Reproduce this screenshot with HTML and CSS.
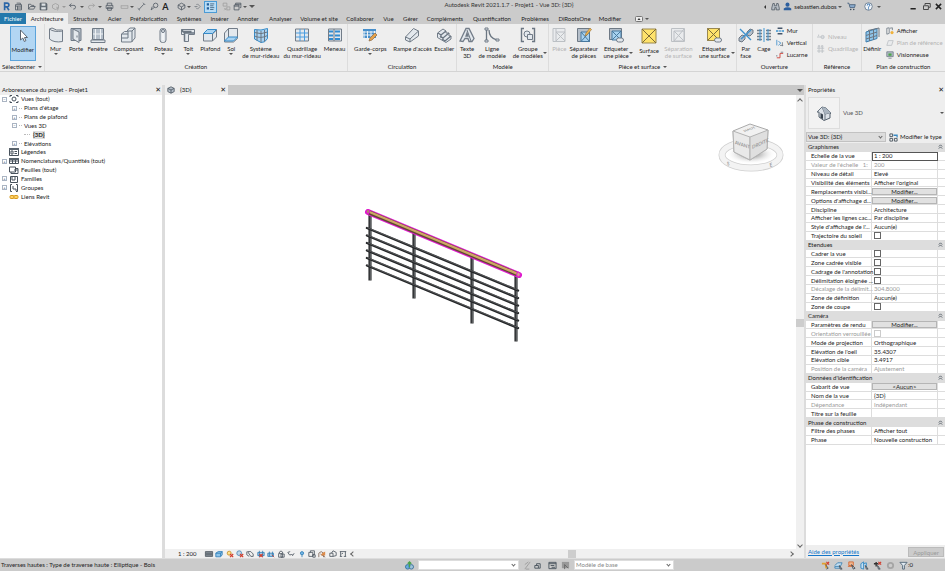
FILE: index.html
```html
<!DOCTYPE html>
<html lang="fr">
<head>
<meta charset="utf-8">
<title>Autodesk Revit 2021.1.7 - Projet1 - Vue 3D: {3D}</title>
<link rel="stylesheet" href="styles.css">
</head>
<body>
<div class="app">
<header class="titlebar">
  <div class="qat">
    <button class="tool" aria-label="Menu Revit"><svg viewBox="0 0 12 12"><path d="M3.5 11V1.5h3.2a2.4 2.4 0 0 1 0 5H3.5M6.3 6.5 9.3 11" fill="none" stroke="#2b67a8" stroke-width="2.2"/></svg></button>
    <button class="tool" aria-label="Accueil"><svg viewBox="0 0 12 12"><path d="M2 3.5h8v7H2zM2 5.5h8M4.7 5.500v5M4.700 8H10M3.500 1.500h5v2" class="d"/></svg></button>
    <button class="tool" aria-label="Ouvrir"><svg viewBox="0 0 12 12"><path d="M2 9.500V3h3l1 1.500h3V6M2 9.500 4.500 6H11L9 9.500z" class="d"/></svg></button>
    <button class="tool" aria-label="Enregistrer"><svg viewBox="0 0 12 12"><path d="M1.500 1.500h8l1 1v8h-9z" fill="#667079" stroke="#4a535c"/><path d="M3.500 2h5v3h-5zM3 7h6v3H3z" fill="#dde1e4"/></svg></button>
    <button class="tool" aria-label="Synchroniser"><svg viewBox="0 0 12 12"><path d="m2 4 4-2 4 2v4L6 10 2 8zM7 7a2 2 0 1 1 1 4" class="g"/></svg></button>
    <span class="caret pale"></span>
    <button class="tool" aria-label="Annuler"><svg viewBox="0 0 12 12"><path d="M4.500 2 2 4.500 4.500 7M2 4.500h6q2 0 2 2.500t-3 2.500" class="d"/></svg></button>
    <span class="caret"></span>
    <button class="tool" aria-label="Rétablir"><svg viewBox="0 0 12 12"><path d="M7.500 2 10 4.500 7.500 7M10 4.500H4q-2 0-2 2.500t3 2.500" class="g"/></svg></button>
    <span class="caret"></span>
    <button class="tool" aria-label="Imprimer"><svg viewBox="0 0 12 12"><path d="M3 4.500v-3h6v3M1.500 4.500h9v4h-9zM3.500 7h5v4h-5z" class="d"/></svg></button>
    <span></span>
    <button class="tool" aria-label="Mesurer"><svg viewBox="0 0 12 12"><path d="M1.500 4.500v4M10.500 4.500v4M1.500 5h9M1.500 8.500h9" class="g"/></svg></button>
    <span class="caret"></span>
    <button class="tool" aria-label="Cote alignée"><svg viewBox="0 0 12 12"><path d="M1 8.500 4 11M3 9.500 9 3M8 1l3 3" class="d"/></svg></button>
    <button class="tool" aria-label="Etiquette"><svg viewBox="0 0 12 12"><circle cx="7.500" cy="4.500" r="3" class="d"/><path d="M1.500 10.500 3 6M1.500 10.500 6 7" class="d"/></svg></button>
    <button class="tool letter" aria-label="Texte">A</button>
    <span></span>
    <button class="tool" aria-label="Vue 3D par défaut"><svg viewBox="0 0 12 12"><path d="m1.500 4 4.500-2.500L10.500 4v4L6 10.500 1.500 8zM1.500 4 6 6.500 10.500 4M6 6.500v4" class="d"/></svg></button>
    <span class="caret"></span>
    <button class="tool" aria-label="Coupe"><svg viewBox="0 0 12 12"><path d="M2 6h4M6 2.500 9.500 6 6 9.500 4 7.500M6 2.500 4.500 4" class="d" opacity=".7"/></svg></button>
    <button class="tool on" aria-label="Lignes fines"><svg viewBox="0 0 12 12"><path d="M1 1.500h3v3H1zM1 7h3v3H1z" fill="#245f9b"/><path d="M5.500 2.500H11M5.500 5H10M5.500 7.500H11M5.500 10H10" stroke="#31536f"/></svg></button>
    <span></span>
    <button class="tool" aria-label="Fermer inactives"><svg viewBox="0 0 12 12"><path d="M1.500 1.500h5v4h-5zM6.500 6.500h4v4h-4zM3 8l3 3M3 11l3-3" class="g"/></svg></button>
    <button class="tool" aria-label="Changer de fenêtre"><svg viewBox="0 0 12 12"><path d="M3.500 4V1.500h7v6H9M1.500 4H8v6.500H1.500zM1.500 5.500H8M3.500 3h7" class="d"/></svg></button>
    <span class="caret"></span>
    <span class="caret wide"></span>
  </div>
  <h1 class="title">Autodesk Revit 2021.1.7 - Projet1 - Vue 3D: {3D}</h1>
  <div class="account">
    <span class="tri-left"></span>
    <button class="tool" aria-label="Rechercher"><svg viewBox="0 0 12 12"><path d="M2.500 2h2v3h3V2h2l1.500 6v2.500H7V7.500H5v3H1V8z" fill="#b6bdc4" stroke="#4c5660"/></svg></button>
    <button class="tool" aria-label="Compte"><svg viewBox="0 0 12 12"><circle cx="6" cy="3.500" r="2.700" fill="#2d5f9e"/><path d="M1 11V8.500Q3 7 6 7t5 1.500V11z" fill="#2d5f9e"/></svg></button>
    <button class="user">sebastien.dubos<span class="caret"></span></button>
    <button class="tool" aria-label="App Store"><svg viewBox="0 0 12 12"><path d="M.5 1.500h2L4 7.500h6l1-4H3.500" fill="#89a9cc" stroke="#3e5771"/><circle cx="5" cy="10" r="1" fill="#345"/><circle cx="9" cy="10" r="1" fill="#345"/></svg></button>
    <button class="tool" aria-label="Aide"><svg viewBox="0 0 12 12"><circle cx="6" cy="6" r="5" fill="#f2f6fa" stroke="#52677e"/><path d="M4.300 4.700q0-2 1.800-2t1.700 1.700Q7.800 5.500 6 6.500v1M6 8.500V10" fill="none" stroke="#2a6cb0" stroke-width="1.300"/></svg></button>
    <span class="caret"></span>
    <span></span>
    <button class="tool" aria-label="Réduire"><svg viewBox="0 0 12 12"><path d="M2 9h7" stroke="#222" stroke-width="2"/></svg></button>
    <button class="tool" aria-label="Restaurer"><svg viewBox="0 0 12 12"><path d="M4 4V2h7v5H9M2 5h6.500v5H2z" fill="none" stroke="#444" stroke-width="1.300"/></svg></button>
    <button class="tool" aria-label="Fermer"><svg viewBox="0 0 12 12"><path d="m2.500 2.500 7 7m0-7-7 7" stroke="#222" stroke-width="2"/></svg></button>
  </div>
</header>

<nav class="tabs">
  <button class="file">Fichier</button><button class="active">Architecture</button><button>Structure</button><button>Acier</button><button>Préfabrication</button><button>Systèmes</button><button>Insérer</button><button>Annoter</button><button>Analyser</button><button>Volume et site</button><button>Collaborer</button><button>Vue</button><button>Gérer</button><button>Compléments</button><button>Quantification</button><button>Problèmes</button><button>DiRootsOne</button><button>Modifier</button><button class="min" aria-label="Réduire le ruban"><svg viewBox="0 0 8 6"><rect x=".5" y=".5" width="7" height="5" rx="1" fill="#eee" stroke="#777"/><path d="m2.500 4 1.500-2 1.500 2z" fill="#333"/></svg><span class="caret"></span></button>
</nav>

<section class="ribbon" aria-label="Ruban">
  <div class="panel p-select">
    <div class="tools"><button class="big selected"><svg viewBox="0 0 16 16"><path d="M5.500 2v10l2.300-2 1.500 3.500 1.600-.8L9.500 9.500h3z" fill="#fff" stroke="#5b6672"/></svg><span>Modifier</span></button></div>
    <div class="name">Sélectionner <span class="caret"></span></div>
  </div>
  <div class="panel p-create">
    <div class="tools">
      <button class="big"><svg viewBox="0 0 16 16"><path d="M1.500 2Q6 5.500 14.500 4v10.500Q6 16 1.500 12z" class="s"/><path d="M1.500 2 4 1q4 3 10.500 2v1" class="s"/></svg><span>Mur</span><i class="caret"></i></button>
      <button class="big"><svg viewBox="0 0 16 16"><path d="M3 1.500h10v12H3z" class="k"/><path d="m5 2 6 3v10.500L5 12z" class="s"/><path d="M9 8.500v2" class="l"/></svg><span>Porte</span></button>
      <button class="big"><svg viewBox="0 0 16 16"><path d="M2.500 1.500h11v11h-11z" class="k"/><path d="M5.500 2v10M10.500 2v10M3 7h10" stroke="#eef1f4"/><path d="M1 13h14v2.500H1z" class="s"/></svg><span>Fenêtre</span></button>
      <button class="big"><svg viewBox="0 0 16 16"><path d="m1.500 7 3-2.500h3V3L10 1h5v10l-3.500 4h-10z" class="s"/><path d="M1.500 7H8V4h4v11M12 4l3-3M8 7v4H1.500" class="l"/></svg><span>Composant</span><i class="caret"></i></button>
      <button class="big"><svg viewBox="0 0 16 16"><rect x="5" y="1.500" width="6" height="14" rx="2.500" class="s"/><ellipse cx="8" cy="4" rx="1.500" ry="1.500" class="l"/><path d="M8 6v7" stroke="#fff"/></svg><span>Poteau</span><i class="caret"></i></button>
      <button class="big"><svg viewBox="0 0 16 16"><path d="M1.500 2.500h13v5h-6v7h-4v-7h-3z" class="s"/><path d="M1.500 2.500 4.500 6h10M4.500 6v8.500M1.500 4.500h10" class="l" stroke-width="1.500"/></svg><span>Toit</span><i class="caret"></i></button>
      <button class="big"><svg viewBox="0 0 16 16"><path d="m1.500 7 4-4h9v7l-4 4h-9z" class="s"/><path d="M10.500 14V7l4-4" class="l"/><path d="m1.500 6.500 4-4h9l-4 4z" class="b"/></svg><span>Plafond</span></button>
      <button class="big"><svg viewBox="0 0 16 16"><path d="m1.500 6 4-4.500h9v10l-4 3.500h-9z" class="s"/><path d="M5.500 1.500V10" class="l"/><path d="m1.500 14 4-4h9l-4 4z" class="b"/></svg><span>Sol</span><i class="caret"></i></button>
      <button class="big"><svg viewBox="0 0 16 16"><path d="M1.500 2.500Q8 4 14.500 1.500v10Q12 16 8 15.500L1.500 12z" class="b"/><path d="M1.500 5.500Q8 8 14.500 5M1.500 9Q8 12 14.500 8.500M4 3v10.500M8 4v11.500M11.500 3v11.500" class="l"/></svg><span>Système<br>de mur-rideau</span></button>
      <button class="big"><svg viewBox="0 0 16 16"><path d="M1.500 2h13v12h-13z" class="s"/><path d="M6 2v12M10.500 2v12M2 6h12M2 10h12" stroke="#4a9de0"/></svg><span>Quadrillage<br>du mur-rideau</span></button>
      <button class="big"><svg viewBox="0 0 16 16"><path d="M1.500 2h13v12h-13z" class="s"/><path d="M2 4.500h4M8 4.500h5M2 8.500h4M8 8.500h5M2 12h4M8 12h5" stroke="#328bd0" stroke-width="2.200"/><path d="M7 2v12" class="l"/></svg><span>Meneau</span></button>
    </div>
    <div class="name">Création</div>
  </div>
  <div class="panel p-circ">
    <div class="tools">
      <button class="big"><svg viewBox="0 0 16 16"><path d="M1 2h13v9H1z" fill="#478fcb"/><path d="M2 14V4M5.500 12V4M9 12V4M12.500 9V4M1 5h13M1 8h13" stroke="#edf2f6"/><path d="m7 14 1-3 5-5 2 2-5 5z" fill="#e6a24a" stroke="#8b6844" stroke-width=".7"/></svg><span>Garde-corps</span><i class="caret"></i></button>
      <button class="big"><svg viewBox="0 0 16 16"><path d="m1.500 10 8-8.500L14.500 4v5L6 15l-4.500-2z" class="s"/><path d="M1.500 10 6 12l8.500-8M6 12v3" class="l"/></svg><span>Rampe d'accès</span></button>
      <button class="big"><svg viewBox="0 0 16 16"><path d="M1.500 6 7 2l3 2v2h3v3h2v3l-5 3.500-8.500-5z" class="s"/><path d="m2 6 3 2 5-4M4 9l3 2 6-5M6 12l3 2 6-5M5 8v3M7 11v2" class="l" stroke-width="1.300"/></svg><span>Escalier</span></button>
    </div>
    <div class="name">Circulation</div>
  </div>
  <div class="panel p-model">
    <div class="tools">
      <button class="big"><svg viewBox="0 0 16 16"><path d="M1 14 7 1.500h3l5 10-2 3h-3l-1-3H6l-2 3zM7 9h2L8 6z" class="s" stroke-width="1.300"/><path d="m8 3 4 11" class="l"/></svg><span>Texte<br>3D</span></button>
      <button class="big"><svg viewBox="0 0 16 16"><path d="M2.500 2v12M5 3q0 8 8 10" class="l" stroke-width="1.300"/><path d="M1 1h3v2H1zM1 13h3v2H1zM12 12h3v2h-3z" class="s"/></svg><span>Ligne<br>de modèle</span></button>
      <button class="big"><svg viewBox="0 0 16 16"><path d="M4 1.500H1.500v13H4M12 1.500h2.500v13H12" class="l" stroke-width="1.400"/><circle cx="7" cy="7" r="3" class="s"/><path d="M7.500 7.500h5v5h-5z" class="s"/></svg><span>Groupe<br>de modèles</span><i class="caret side"></i></button>
    </div>
    <div class="name">Modèle</div>
  </div>
  <div class="panel p-room">
    <div class="tools">
      <button class="big" disabled><svg viewBox="0 0 16 16"><path d="M2 1.500h12v13H2zM5 5h9M5 2v12M5 5l9 9M5 14l9-9" class="s"/></svg><span>Pièce</span></button>
      <button class="big"><svg viewBox="0 0 16 16"><path d="M1.500 1.500h12v13h-12z" class="k"/><path d="M5 5h8.500v9.500H5z" fill="#a8d2ef" stroke="#48799e"/><path d="m5 5 8.500 9.500M5 14.500 13.500 5" stroke="#48799e"/><path d="m9 9 1-3 4-5 1.500 1.500L11 8z" fill="#f0b64f" stroke="#94703b" stroke-width=".6"/></svg><span>Séparateur<br>de pièces</span></button>
      <button class="big"><svg viewBox="0 0 16 16"><path d="M1.500 1.500h12v11h-12z" class="k"/><path d="M4 4h9v9H4z" fill="#a8d2ef" stroke="#48799e"/><path d="m4 4 9 9M4 13l9-9" stroke="#48799e"/><rect x="8.500" y="11" width="7" height="4" rx="2" class="s"/></svg><span>Etiqueter<br>une pièce</span><i class="caret side"></i></button>
      <button class="big area"><svg viewBox="0 0 16 16"><path d="M1 1h14v14H1z" fill="#ffe36b" stroke="#9a8850"/><path d="m1 1 14 14M1 15 15 1" stroke="#7d6b38"/></svg><span>Surface</span><i class="caret"></i></button>
      <button class="big" disabled><svg viewBox="0 0 16 16"><path d="M1.500 1.500h13v13h-13zM4 4h10v10H4zM4 4l10 10M4 14 14 2" class="s"/></svg><span>Séparation<br>de surface</span></button>
      <button class="big"><svg viewBox="0 0 16 16"><path d="M1.500 1.500h12v12h-12z" fill="#ffe36b" stroke="#9a8850"/><path d="m1.500 1.500 12 12M1.500 13.500l12-12" stroke="#7d6b38"/><rect x="8.500" y="11" width="7" height="4" rx="2" class="s"/></svg><span>Etiqueter<br>une surface</span><i class="caret side"></i></button>
    </div>
    <div class="name">Pièce et surface <span class="caret"></span></div>
  </div>
  <div class="panel p-open">
    <div class="tools">
      <button class="big"><svg viewBox="0 0 16 16"><path d="m9 5 3-3 3 1v3l-3 3-3-1zM1 11l3-3 3 1v3l-3 3-3-1z" class="k"/><path d="m2 2 11 11M3 12 13 3" stroke="#3f91cd" stroke-width="1.400"/></svg><span>Par<br>face</span></button>
      <button class="big"><svg viewBox="0 0 16 16"><path d="M1 3.500h5M10 3.500h5M1 6.500h5M10 6.500h5M1 9.500h5M10 9.500h5M1 12.500h5M10 12.500h5" stroke="#737d88" stroke-width="1.700"/><path d="M8 1v14M4 2v12M12 2v12" stroke="#4598d3"/></svg><span>Cage</span></button>
      <div class="stack">
        <button><svg viewBox="0 0 10 10"><path d="M2 1.500h6M2 8.500h6" stroke="#44556a" stroke-width="2"/><path d="M0 5h3M7 5h3M4 5h2" stroke="#3b92d0" stroke-width="2"/></svg>Mur</button>
        <button><svg viewBox="0 0 10 10"><path d="M1 1v7M3 3l3 2-3 3" stroke="#3289ca" fill="none"/><path d="M8 4v5M5 8h4" class="l"/></svg>Vertical</button>
        <button><svg viewBox="0 0 10 10"><path d="M1 8.500h4V3h4" fill="none" stroke="#cf4b43" stroke-width="1.200"/><path d="M1 7V5M6 1.500h3" class="l"/></svg>Lucarne</button>
      </div>
    </div>
    <div class="name">Ouverture</div>
  </div>
  <div class="panel p-ref">
    <div class="tools"><div class="stack two">
      <button disabled><svg viewBox="0 0 10 10"><path d="M0 5h5M2 2v2" class="l"/><circle cx="7" cy="5" r="2" class="k"/></svg>Niveau</button>
      <button disabled><svg viewBox="0 0 10 10"><path d="M2.500 2v8M6.500 2v8M0 4h9M0 7.500h9" class="l"/><circle cx="2.500" cy="1.500" r="1" class="l"/><circle cx="6.500" cy="1.500" r="1" class="l"/></svg>Quadrillage</button>
    </div></div>
    <div class="name">Référence</div>
  </div>
  <div class="panel p-plan">
    <div class="tools">
      <button class="big"><svg viewBox="0 0 16 16"><path d="m2 5 11-3.500v10L2 15z" fill="#8fc5ea" stroke="#3f7caa"/><path d="M5.500 4v10M9.500 3v10M2 8.500 13 5M2 12l11-3.500M4 3.500 15 1v9" class="l" stroke="#3f7caa"/></svg><span>Définir</span></button>
      <div class="stack">
        <button><svg viewBox="0 0 10 10"><path d="M1 1.500 4 1v7L1 9zM5 1.500l3-.5v3" class="l"/><circle cx="7.500" cy="7" r="2" fill="#f0b23c"/></svg>Afficher</button>
        <button disabled><svg viewBox="0 0 10 10"><path d="M3 2h6L7 8H1z" class="s"/></svg>Plan de référence</button>
        <button><svg viewBox="0 0 10 10"><path d="M1 1h8v6H1zM3 9h4" class="k"/><path d="M3 3h4v3H3z" fill="#4da34c"/></svg>Visionneuse</button>
      </div>
    </div>
    <div class="name">Plan de construction</div>
  </div>
</section>
<div class="optionbar"></div>

<main class="workspace">
  <aside class="browser">
    <div class="bar"><span>Arborescence du projet - Projet1</span><button class="x" aria-label="Fermer l'arborescence">✕</button></div>
    <ul class="tree">
      <li><b class="ex">−</b><svg viewBox="0 0 10 8"><path d="M1 2V.5h2M7 .5h2V2M1 6v1.500h2M7 7.500h2V6" class="d"/><circle cx="5" cy="4" r="2" class="d"/></svg>Vues (tout)</li>
      <li class="sub"><b class="ex">+</b><u></u>Plans d'étage</li>
      <li class="sub"><b class="ex">+</b><u></u>Plans de plafond</li>
      <li class="sub"><b class="ex">−</b><u></u>Vues 3D</li>
      <li class="leaf"><u></u><strong>{3D}</strong></li>
      <li class="sub"><b class="ex">+</b><u></u>Elévations</li>
      <li><b class="no"></b><svg viewBox="0 0 10 8"><path d="M.5.5h9v7h-9zM2 3h2v3H2zM5.500 3.500H8M5.500 5.500H8" class="d"/><path d="M0 0h10v2H0z" fill="#59636c"/></svg>Légendes</li>
      <li><b class="ex">+</b><svg viewBox="0 0 10 8"><path d="M.5 1.500h9v5h-9zM.5 4h9M3.500 1v6M6.500 1v6" class="d"/><path d="M0 1h10v2H0z" fill="#59636c"/></svg>Nomenclatures/Quantités (tout)</li>
      <li><b class="no"></b><svg viewBox="0 0 10 8"><path d="M.5 1h6v5h-6zM2 6v1.500h7v-5H6.500M5 4h4" class="d"/></svg>Feuilles (tout)</li>
      <li><b class="ex">+</b><svg viewBox="0 0 10 8"><path d="M1.500 1.500h7v6h-7zM3 1v4h3V1" class="d"/></svg>Familles</li>
      <li><b class="ex">+</b><svg viewBox="0 0 10 8"><path d="M3 .5H1.500v7H3M7 .5h1.500v7H7M4 2v3h3v2" class="d"/></svg>Groupes</li>
      <li><b class="no"></b><svg viewBox="0 0 10 8"><rect x="1" y="2.500" width="4" height="3" rx="1" class="o"/><rect x="5" y="2.500" width="4" height="3" rx="1" class="o"/></svg>Liens Revit</li>
    </ul>
  </aside>

  <section class="view">
    <div class="doctabs"><div class="doctab"><svg viewBox="0 0 10 10"><path d="m1 3 4-2 4 2v4L5 9 1 7z" fill="#b5bfca" stroke="#4b5660"/><path d="m1 3 4 2 4-2M5 5v4" class="d"/></svg><span>{3D}</span><button class="x" aria-label="Fermer la vue">✕</button></div><span class="caret wide"></span></div>
    <div class="middle">
      <div class="canvas">
        <svg class="railing" viewBox="0 0 190 160" role="img" aria-label="Garde-corps">
          <g stroke="#343638" stroke-width="3.200"><path d="M20 18v67.500M64 38v65.500M122 62v66.500M166 80v66.500"/></g>
          <g stroke="#85888a" stroke-width="1"><path d="M21 18v67M65 38v65M123 62v66M167 80v66"/></g>
          <g stroke="#242628" stroke-width="2.400" stroke-linecap="round"><path d="m17 33 151 62.500M17 40.500l151 62.500M17 48l151 62.500M17 55.500l151 62.500M17 63l151 62.500M17 70.500l151 62.500"/></g>
          <g stroke="#77797b" stroke-width=".6"><path d="m17 32.500 151 62.500M17 40l151 62.500M17 47.500l151 62.500M17 55l151 62.500M17 62.500l151 62.500M17 70l151 62.500"/></g>
          <path d="m18 17 151 63" stroke="#e019cf" stroke-width="6" stroke-linecap="round"/>
          <path d="m19 17.300 148 61.800" stroke="#5f4a31" stroke-width="4"/>
          <path d="m19 16.800 148 61.800" stroke="#cfa766" stroke-width="2.300"/>
          <ellipse cx="168.500" cy="79.500" rx="1.800" ry="2.300" fill="#d9a08f" stroke="#e019cf"/>
          <ellipse cx="18" cy="16.500" rx="1.800" ry="2" fill="#b77a78" stroke="#e019cf"/>
        </svg>
        <svg class="cube" viewBox="0 0 70 56" role="img" aria-label="ViewCube">
          <defs><radialGradient id="shade"><stop offset="0" stop-color="#666"/><stop offset="1" stop-color="#fff" stop-opacity="0"/></radialGradient></defs>
          <ellipse cx="35" cy="34" rx="29" ry="13" fill="none" stroke="#cfcfcf" stroke-width="7"/>
          <ellipse cx="35" cy="34" rx="29" ry="13" fill="none" stroke="#f3f3f3" stroke-width="5.500"/>
          <ellipse cx="35" cy="33" rx="25" ry="10" fill="url(#shade)"/>
          <path d="M17 10 34 3l18 6-1 19-17 11-16-8z" fill="#f1f1f1" stroke="#aaa"/>
          <path d="m17 10 17 6v23l-16-8z" fill="#e9e9e9" stroke="#b3b3b3"/><path d="m34 16 18-7-1 19-17 11z" fill="#dfdfdf" stroke="#b3b3b3"/>
          <text class="face" transform="matrix(.9 .3 0 1 19 23)">AVANT</text><text class="face" transform="matrix(.9 -.4 0 1 36 28)">DROITE</text><text class="face" transform="matrix(.8 -.3 .6 .4 29 11)">HAUT</text>
          <text class="face" transform="matrix(.9 -.3 .2 1 54 46)">E</text><text class="face" transform="matrix(.9 .3 0 1 11 44)">S</text>
        </svg>
      </div>
      <div class="vscroll"><i class="chev up"></i><span class="thumb"></span><i class="chev down"></i></div>
    </div>
    <div class="viewbar">
      <span class="scale">1 : 200</span>
      <div class="viewtools">
        <svg viewBox="0 0 10 10"><path d="M.5 2h9v6h-9zM1 4h8M1 6h8" fill="#8f989f" stroke="#4d565d"/></svg>
        <svg viewBox="0 0 10 10"><path d="m1 4 3-2h5v4L7 8.500H1z" fill="#8dc5ec" stroke="#2a79b4"/><path d="M1 4h6v4M7 4l2-2" fill="none" stroke="#2a79b4"/></svg>
        <svg viewBox="0 0 10 10"><circle cx="4" cy="4" r="2.500" fill="#ffe18a" stroke="#c28c23"/><path d="m5 5 4 4m0-4L5 9" stroke="#d43d2c" stroke-width="1.500"/></svg>
        <svg viewBox="0 0 10 10"><circle cx="4" cy="4" r="3" fill="#bcd8ec" stroke="#4a83af"/><path d="m5 5 4 4m0-4L5 9" stroke="#d43d2c" stroke-width="1.500"/></svg>
        <svg viewBox="0 0 10 10"><path d="M1 2v4l3 2M2 2h4l3 3v3H6z" class="d"/></svg>
        <svg viewBox="0 0 10 10"><path d="M1 3h8v4H1zM3 1v8M7 1v8" fill="#a8cfe9" stroke="#2e7bb3"/><path d="m3 5 4 4m0-4L3 9" stroke="#d43d2c" stroke-width="1.500"/></svg>
        <svg viewBox="0 0 10 10"><path d="M1 4h7v4H1zM3 2v6M7 2v6" fill="#a8cfe9" stroke="#2e7bb3"/><path d="m6 6 3 3" stroke="#d43d2c"/></svg>
        <svg viewBox="0 0 10 10"><path d="M2 4.500h5V9H2zM3 4V2.500Q5 0 7 2.500V4M5 5h4v4H5z" class="d"/></svg>
        <svg viewBox="0 0 10 10"><path d="m1 3 2 3h2l1-1 1 2 2-3M1 3l3-1" class="d"/></svg>
        <svg viewBox="0 0 10 10"><circle cx="5" cy="4" r="2" fill="#72b7e9" stroke="#2e7bb3"/><path d="M5 6v3" stroke="#2e7bb3"/></svg>
        <svg viewBox="0 0 10 10"><path d="M1 3h5v5H1zM3 3V1h5v5H6M6 6h3v3H6z" class="d"/></svg>
        <svg viewBox="0 0 10 10"><path d="M1 9V4l3-2 3 2v5M3 5l6 4" fill="none" stroke="#7a6050"/><path d="m4 7 1-3 4-2v5z" fill="#dc8b4a"/></svg>
        <svg viewBox="0 0 10 10"><path d="M1 4h4v4H1zM3 4l2-3 4 2v4L5 8" class="d"/></svg>
        <svg viewBox="0 0 10 10"><path d="M1 2h8M2 2v6M8 2v6M1 8h3M6 8h3M3 5l2-1" class="d"/></svg>
      </div>
      <i class="chev left"></i>
      <div class="hscroll"><span class="thumb"></span></div>
      <i class="chev right"></i>
      <span class="grip"></span>
    </div>
  </section>

  <aside class="props">
    <div class="bar"><span>Propriétés</span><button class="x" aria-label="Fermer les propriétés">✕</button></div>
    <button class="type"><span class="thumbnail"><svg viewBox="0 0 16 16"><path d="m1 7 5-5 4 1 5 5-1 1v4l-6 2.500L3 12V7z" fill="#dce2e8" stroke="#55616d"/><path d="m1 7 5-5 3 7 5-1M9 9v6" class="l"/><path d="M4.500 8 7 9.500v4.500l-2.500-1z" fill="#39444f"/><path d="m6 2 4 1 5 5-6 1z" fill="#a9b4bf"/></svg></span><span class="typename">Vue 3D</span><span class="caret"></span></button>
    <div class="instance"><span class="combo"><select aria-label="Filtre des propriétés"><option>Vue 3D: {3D}</option></select><i class="chev down"></i></span><button class="edit"><svg viewBox="0 0 10 10"><path d="M1 1h3v3H1zM1 6h3v3H1zM6 6h3v3H6z" class="d"/><path d="M5 2.500h4V5" fill="none" stroke="#3a8ac4" stroke-width="1.400"/></svg>Modifier le type</button></div>
    <div class="sheet">
    <table>
      <tr class="group"><th colspan="2">Graphismes</th><th><svg viewBox="0 0 6 6"><path d="m1 3 2-2 2 2M1 5.500l2-2 2 2" class="d"/></svg></th></tr>
      <tr><th><label for="ech">Echelle de la vue</label></th><td class="focus"><input id="ech" value="1 : 200"></td><td></td></tr>
      <tr class="off"><th>Valeur de l'échelle &nbsp; 1:</th><td>200</td><td></td></tr>
      <tr><th>Niveau de détail</th><td>Elevé</td><td></td></tr>
      <tr><th>Visibilité des éléments</th><td>Afficher l'original</td><td></td></tr>
      <tr><th>Remplacements visibi...</th><td class="act"><button>Modifier...</button></td><td></td></tr>
      <tr><th>Options d'affichage d...</th><td class="act"><button>Modifier...</button></td><td></td></tr>
      <tr><th>Discipline</th><td>Architecture</td><td></td></tr>
      <tr><th>Afficher les lignes cac...</th><td>Par discipline</td><td></td></tr>
      <tr><th>Style d'affichage de l'...</th><td>Aucun(e)</td><td></td></tr>
      <tr><th><label for="c1">Trajectoire du soleil</label></th><td><input type="checkbox" id="c1"></td><td></td></tr>
      <tr class="group"><th colspan="2">Etendues</th><th><svg viewBox="0 0 6 6"><path d="m1 3 2-2 2 2M1 5.500l2-2 2 2" class="d"/></svg></th></tr>
      <tr><th><label for="c2">Cadrer la vue</label></th><td><input type="checkbox" id="c2"></td><td></td></tr>
      <tr><th><label for="c3">Zone cadrée visible</label></th><td><input type="checkbox" id="c3"></td><td></td></tr>
      <tr><th><label for="c4">Cadrage de l'annotation</label></th><td><input type="checkbox" id="c4"></td><td></td></tr>
      <tr><th><label for="c5">Délimitation éloignée ...</label></th><td><input type="checkbox" id="c5"></td><td></td></tr>
      <tr class="off"><th>Décalage de la délimit...</th><td>304.8000</td><td></td></tr>
      <tr><th>Zone de définition</th><td>Aucun(e)</td><td></td></tr>
      <tr><th><label for="c6">Zone de coupe</label></th><td><input type="checkbox" id="c6"></td><td></td></tr>
      <tr class="group"><th colspan="2">Caméra</th><th><svg viewBox="0 0 6 6"><path d="m1 3 2-2 2 2M1 5.500l2-2 2 2" class="d"/></svg></th></tr>
      <tr><th>Paramètres de rendu</th><td class="act"><button>Modifier...</button></td><td></td></tr>
      <tr class="off"><th><label for="c7">Orientation verrouillée</label></th><td><input type="checkbox" id="c7" disabled></td><td></td></tr>
      <tr><th>Mode de projection</th><td>Orthographique</td><td></td></tr>
      <tr><th>Elévation de l'oeil</th><td>35.4307</td><td></td></tr>
      <tr><th>Elévation cible</th><td>3.4917</td><td></td></tr>
      <tr class="off"><th>Position de la caméra</th><td>Ajustement</td><td></td></tr>
      <tr class="group"><th colspan="2">Données d'identification</th><th><svg viewBox="0 0 6 6"><path d="m1 3 2-2 2 2M1 5.500l2-2 2 2" class="d"/></svg></th></tr>
      <tr><th>Gabarit de vue</th><td class="act"><button>&lt;Aucun&gt;</button></td><td></td></tr>
      <tr><th>Nom de la vue</th><td>{3D}</td><td></td></tr>
      <tr class="off"><th>Dépendance</th><td>Indépendant</td><td></td></tr>
      <tr><th>Titre sur la feuille</th><td></td><td></td></tr>
      <tr class="group"><th colspan="2">Phase de construction</th><th><svg viewBox="0 0 6 6"><path d="m1 3 2-2 2 2M1 5.500l2-2 2 2" class="d"/></svg></th></tr>
      <tr><th>Filtre des phases</th><td>Afficher tout</td><td></td></tr>
      <tr><th>Phase</th><td>Nouvelle construction</td><td></td></tr>
    </table>
    </div>
    <div class="foot"><a href="#">Aide des propriétés</a><button disabled>Appliquer</button></div>
  </aside>
</main>

<footer class="status">
  <span class="hint">Traverses hautes : Type de traverse haute : Elliptique - Bois</span>
  <svg viewBox="0 0 10 10"><circle cx="3" cy="6.500" r="2.500" fill="#65aee0" stroke="#3b6f98"/><circle cx="7" cy="6.500" r="2.500" fill="#9dc3dc" stroke="#3b6f98"/><path d="M5 1v6M3 3l2-2 2 2" fill="none" stroke="#48a34b" stroke-width="1.500"/></svg>
  <span class="combo"><select aria-label="Sous-projet actif"><option></option></select><i class="chev down"></i></span>
  <span class="pair"><svg viewBox="0 0 10 10"><path d="M2 9 8 1M2 4l4-3M3 9h4" class="g"/></svg><svg viewBox="0 0 10 10"><path d="M2 5h4v3H2zM4 5V3h4v5H6" class="d"/></svg></span>
  <span class="pair options"><svg viewBox="0 0 10 10"><path d="M1 1.500h8v7H1zM1 3h8M3 5h4M4 7h4" class="d"/></svg><svg viewBox="0 0 10 10"><path d="M1 1h8v7H1z" fill="#999"/><path d="m4 4 4 4M4 4v5" stroke="#666"/></svg></span>
  <span class="combo"><select aria-label="Variante active" class="muted"><option>Modèle de base</option></select><i class="chev down"></i></span>
  <div class="filters">
    <svg viewBox="0 0 10 10"><path d="M1 3h5M5 3l1 5" stroke="#e3a02e" stroke-width="2"/><path d="m6 1 3 3m0-3L6 4" stroke="#d33b2c" stroke-width="1.300"/><path d="m5 4 3 4-2 1" class="d"/></svg>
    <svg viewBox="0 0 10 10"><path d="m1 5 3-3h5L7 6H1v2h6" fill="#c2dff2" stroke="#3f83b3"/><path d="m6 5 3 4H7z" class="d"/></svg>
    <svg viewBox="0 0 10 10"><path d="M2 1h5v4H2zM1 6h6" fill="#f2b68e" stroke="#d36b37"/><path d="m5 4 4 4-2 1z" class="d"/></svg>
    <svg viewBox="0 0 10 10"><path d="M1 8V3l3-2v8zM4 3l3-1v5" fill="#c2dff2" stroke="#3389c5"/><path d="m6 5 3 4H7z" class="d"/></svg>
    <svg viewBox="0 0 10 10"><path d="M1 3h5M3.500 1v5" stroke="#333" stroke-width="1.500"/><path d="m6 1 3 3m0-3L6 4" stroke="#d33b2c" stroke-width="1.300"/><path d="m5 5 3 4H6z" class="d"/></svg>
    <svg viewBox="0 0 10 10"><circle cx="5" cy="5" r="3" fill="none" stroke="#a5a5a5" stroke-width="2"/></svg>
    <span class="count"><svg viewBox="0 0 10 10"><path d="M1 1.500h8L6 5v4H4V5z" fill="#dfe9f1" stroke="#506577"/></svg>:0</span>
  </div>
</footer>
</div>
</body>
</html>
```
FILE: styles.css
```css
* { box-sizing: border-box; }
body { margin: 0; font: 6px/8px Lato, "Open Sans", sans-serif; color: #222; background: #eee; }
button, input, select { font: inherit; color: inherit; margin: 0; padding: 0; border: 0; background: none; border-radius: 0; }
button { white-space: nowrap; }
svg { display: block; flex: none; overflow: visible; }
.app { display: flex; flex-direction: column; height: 100vh; overflow: hidden; }

/* Shared icon strokes */
.d { fill: none; stroke: #48525c; }
.g { fill: none; stroke: #9c9c9c; }
.s { fill: #e3e8ed; stroke: #727c88; }
.k { fill: #b5bfca; stroke: #6e7985; }
.l { fill: none; stroke: #6b7682; }
.b { fill: #a9d3f2; stroke: #368bc8; }
.o { fill: #ffd265; stroke: #d79a20; }

.caret { display: inline-block; border: 2px solid transparent; border-top-color: #555; border-bottom: 0; width: 0; height: 0; }
.caret.pale { border-top-color: #999; }
.caret.wide { border-width: 3px; border-bottom: 0; }
.chev { width: 4px; height: 4px; border: solid #666; border-width: 1px 0 0 1px; flex: none; }
.chev.up { transform: rotate(45deg); }
.chev.down { transform: rotate(225deg); }
.chev.left { transform: rotate(-45deg); }
.chev.right { transform: rotate(135deg); }

.titlebar { flex: none; display: flex; height: 13px; background: #cbcbcb; }
.qat { display: grid; align-items: center; justify-items: center; grid-template-columns: 12px 13px 12px 13px 11px 6px 11px 8px 10px 7px 12px 3px 12px 4px 14px 12px 11px 4px 12px 4px 12px 14px 4px 11px 11px 4px 10px; }
.tool { display: grid; place-items: center; height: 11px; }
.tool svg { width: 9px; height: 9px; }
.tool.letter { font-size: 9px; font-weight: 700; }
.tool.on { width: 13px; height: 12px; background: #b8dcf5; border: 1px solid #4b9bd5; }
.title { flex: 1; margin: 0; font-size: 6px; line-height: 10px; font-weight: 400; text-align: center; color: #333; }
.account { display: grid; align-items: center; justify-items: center; grid-template-columns: 8px 12px 12px 50px 16px 18px 4px 25px 14px 12px 13px; }
.tri-left { border: 2px solid transparent; border-right-color: #333; border-left: 0; }
.user { display: flex; align-items: center; gap: 1px; }

.tabs { flex: none; display: grid; height: 11px; background: #cbcbcb; grid-template-columns: 26px 42px 35px 23px 45px 36px 25px 32px 33px 44px 38px 19px 25px 44px 50px 36px 43px 28px 36px; }
.tabs .file { background: #2479ac; color: #fff; }
.tabs .active { background: #eee; }
.min { display: flex; align-items: center; justify-content: center; gap: 2px; }
.min svg { width: 8px; height: 6px; }

.ribbon { flex: none; display: flex; height: 48px; background: #eee; border-bottom: 1px solid #d4d4d4; }
.panel { min-width: 0; display: flex; flex-direction: column; border-right: 1px solid #dcdcdc; }
.tools { flex: 1; display: grid; padding-top: 2px; }
.name { text-align: center; line-height: 9px; }
.name .caret { margin: 0 0 1px 1px; }
.p-select { flex: 44 1 0; } .p-select .tools { padding-left: 10px; padding-right: 8px; }
.p-create { flex: 305 1 0; } .p-create .tools { grid-template-columns: 22fr 19fr 24fr 38fr 32fr 18fr 26fr 16fr 43fr 40fr 25fr; }
.p-circ { flex: 109 1 0; } .p-circ .tools { grid-template-columns: 45fr 40fr 24fr; }
.p-model { flex: 92 1 0; } .p-model .tools { grid-template-columns: 20fr 30fr 41fr; }
.p-room { flex: 188 1 0; } .p-room .tools { grid-template-columns: 20fr 29fr 36fr 30fr 29fr 43fr; }
.p-open { flex: 76 1 0; } .p-open .tools { grid-template-columns: 18px 18px 1fr; }
.p-ref { flex: 48 1 0; } .p-ref .tools { padding-left: 1px; }
.p-plan { flex: 84 1 0; border-right: 0; } .p-plan .tools { grid-template-columns: 21px 1fr; }
.big { position: relative; min-width: 0; display: flex; flex-direction: column; align-items: center; line-height: 7px; }
.big svg { width: 16px; height: 16px; margin: 1px 0 2px; }
.big.area svg { margin: 2px 0 3px; }
.big > .caret { margin-top: 1px; }
.big > .caret.side { position: absolute; right: 1px; bottom: 8px; }
.big.selected { background: #b2d6f3; border: 1px solid #5ba3da; height: 35px; }
button:disabled { color: #b4b4b4; }
button:disabled svg { opacity: .4; }
.stack { display: flex; flex-direction: column; justify-content: space-between; align-items: flex-start; padding: 1px 0 3px 3px; }
.stack.two { justify-content: center; gap: 4px; }
.stack button { display: flex; align-items: center; gap: 3px; }
.stack svg { width: 8px; height: 8px; }
.optionbar { flex: none; height: 13px; }

.workspace { flex: 1; min-height: 0; display: grid; grid-template-columns: 163px 1fr 139px; column-gap: 2px; background: #dcdcdc; }
.bar { flex: none; display: flex; align-items: center; justify-content: space-between; height: 10px; padding: 0 1px 0 2px; background: #eee; }
.x { font: 700 7px/8px "DejaVu Sans", sans-serif; color: #222; }
.browser { background: #fff; border-right: 1px solid #ddd; }
.tree { list-style: none; margin: 0; padding: 0 0 0 2px; display: grid; grid-auto-rows: 1fr; height: 106px; }
.tree li { display: flex; align-items: center; gap: 2px; }
.tree svg { width: 10px; height: 8px; }
.tree li.sub { padding-left: 10px; }
.tree li.leaf { padding-left: 22px; gap: 3px; }
.tree u { width: 3px; border-top: 1px dotted #bbb; }
.tree .leaf u { width: 6px; }
.tree strong { font-weight: 700; background: #ddd; }
.ex { width: 5px; height: 5px; border: 1px solid #aab4c2; font-weight: 400; font-size: 4px; line-height: 3px; text-align: center; color: #246; flex: none; }
.no { width: 5px; flex: none; }

.view { min-width: 0; display: flex; flex-direction: column; background: #fff; }
.doctabs { display: flex; align-items: center; justify-content: space-between; height: 10px; background: #c8c8c8; padding-right: 1px; }
.doctab { display: flex; align-items: center; gap: 5px; width: 63px; height: 10px; padding: 0 2px; background: #eee; }
.doctab svg { width: 8px; height: 8px; }
.doctab .x { margin-left: auto; }
.middle { flex: 1; min-height: 0; display: flex; }
.canvas { position: relative; flex: 1; }
.railing { position: absolute; left: 185px; top: 100px; width: 190px; height: 160px; }
.cube { position: absolute; right: 10px; top: 26px; width: 70px; height: 56px; }
.face { font-size: 5px; font-weight: 700; fill: #9a9a9a; }
.vscroll { width: 8px; display: flex; flex-direction: column; align-items: center; justify-content: space-between; padding: 4px 0 2px; background: #f0f0f0; }
.thumb { width: 8px; height: 8px; background: #cdcdcd; }
.viewbar { flex: none; display: flex; align-items: center; height: 9px; background: #f0f0f0; }
.scale { width: 39px; padding-left: 13px; white-space: nowrap; }
.viewtools { display: grid; grid-template-columns: repeat(14, 1fr); justify-items: center; width: 144px; margin-right: 3px; }
.viewtools svg { width: 8px; height: 8px; }
.hscroll { flex: 1; display: flex; justify-content: center; }
.grip { width: 11px; }

.props { min-width: 0; display: flex; flex-direction: column; background: #eee; }
.type { flex: none; display: flex; align-items: center; height: 36px; padding: 0 1px 0 2px; text-align: left; color: #555; }
.thumbnail { display: grid; place-items: center; width: 32px; height: 32px; border: 1px solid #ddd; background: #f2f2f2; }
.thumbnail svg { width: 16px; height: 16px; }
.typename { flex: 1; padding-left: 3px; }
.instance { flex: none; display: flex; align-items: center; gap: 3px; height: 12px; }
.instance .combo { width: 80px; background: #ddd; border: 1px solid #c2c2c2; }
.combo { display: flex; align-items: center; height: 10px; background: #fff; border: 1px solid #ddd; padding-right: 3px; }
.combo select { flex: 1; min-width: 0; height: 8px; padding-left: 1px; appearance: none; }
.combo .muted { color: #888; }
.combo .chev { width: 3px; height: 3px; margin-bottom: 2px; }
.edit { display: flex; align-items: center; gap: 2px; }
.edit svg { width: 9px; height: 9px; }
.sheet { flex: 1; min-height: 0; overflow: hidden; background: #fff; }
table { width: 100%; height: 302px; table-layout: fixed; border-collapse: separate; border-spacing: 0; }
tr { height: 8px; }
th, td { height: 8px; padding: 0 0 0 2px; font-weight: 400; text-align: left; line-height: 7px; white-space: nowrap; border-bottom: 1px solid #ddd; border-right: 1px solid #ddd; vertical-align: middle; }
th:first-child { padding-left: 5px; }
td:last-child, th:last-child { width: 7px; border-right: 0; }
.group th { background: #ddd; border-right: 0; }
.group th:first-child { padding-left: 2px; }
.group th:last-child { padding: 0; }
.group svg { width: 5px; height: 5px; }
.off { color: #999; }
td input:not([type]) { display: block; width: 100%; height: 7px; }
td.focus { outline: 1px solid #555; outline-offset: -1px; }
td input[type="checkbox"] { appearance: none; display: block; width: 7px; height: 7px; border: 1px solid #666; background: #fff; }
td input[type="checkbox"]:disabled { border-color: #ccc; }
td.act { padding: 0; }
td.act button { display: block; width: 100%; height: 7px; line-height: 5px; background: #e1e1e1; border: 1px solid #b5b5b5; }
.foot { flex: none; display: flex; align-items: center; justify-content: space-between; height: 13px; padding: 0 1px 0 2px; }
.foot a { color: #1677c9; }
.foot button { width: 36px; height: 10px; line-height: 9px; background: #ccc; border: 1px solid #bbb; color: #999; }

.status { flex: none; display: grid; align-items: center; height: 13px; border-top: 1px solid #ddd; background: #cbcbcb; grid-template-columns: 405px 13px 101px 25px 30px 100px 1fr; }
.status svg { width: 9px; height: 9px; }
.hint { padding-left: 1px; }
.pair { display: flex; gap: 1px; padding-left: 4px; }
.pair.options { gap: 4px; }
.filters { display: grid; grid-template-columns: repeat(6, 13px) 18px; justify-self: end; justify-items: center; padding-right: 30px; }
.count { display: flex; align-items: center; }
```
